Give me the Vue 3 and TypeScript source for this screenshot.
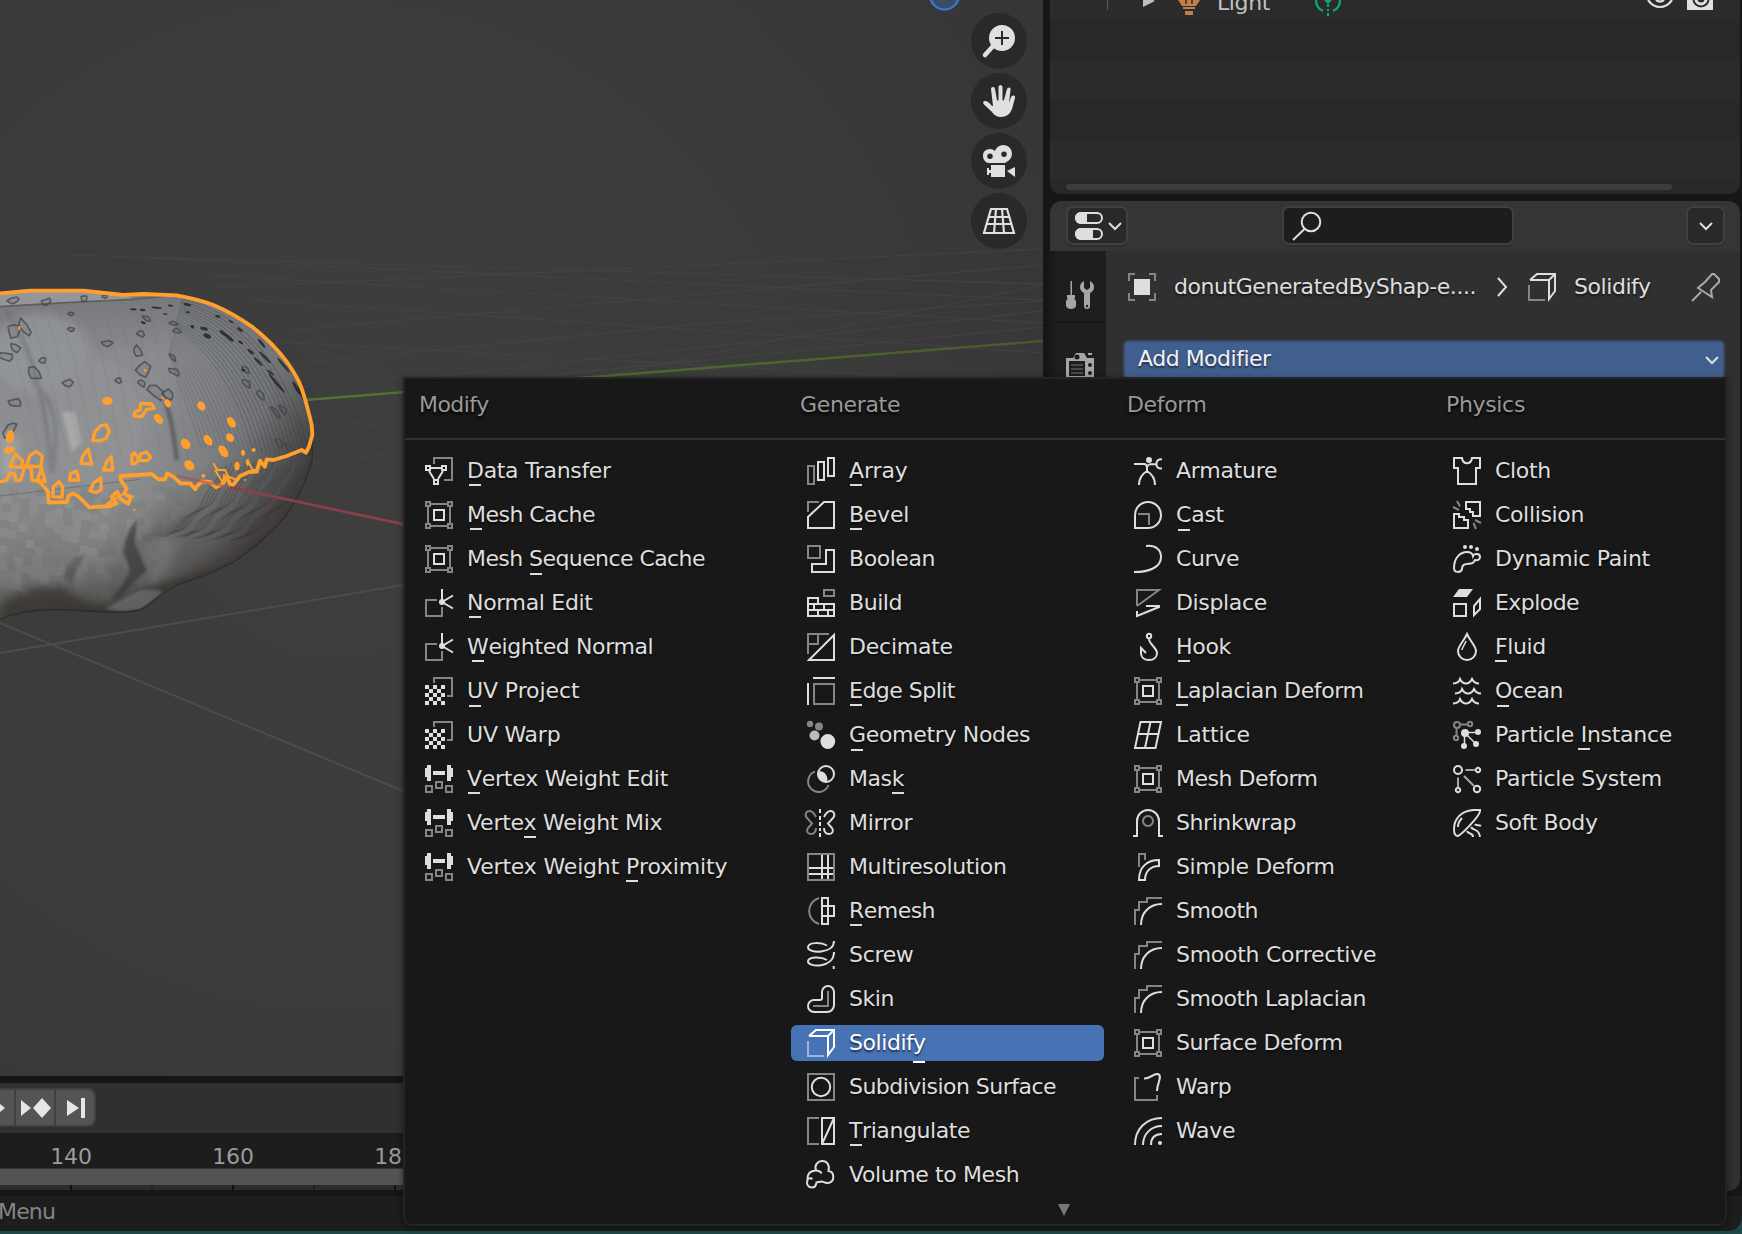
<script setup lang="ts">
type Shape = [cls: string, d: string]
interface Item { label: string; icon: string; key?: number; active?: boolean }
interface Column { title: string; cls: string; items: Item[] }

const rect = (x: number, y: number, w: number, h: number) => `M${x} ${y}h${w}v${h}h${-w}Z`
const dot = (x: number, y: number, r: number) => `M${x - r} ${y}a${r} ${r} 0 1 0 ${2 * r} 0a${r} ${r} 0 1 0 ${-2 * r} 0Z`

/* Whole-pixel glyph advances at 22px: difference from the font's own advance, in pixels */
const snap: Record<string, number> = {
  a: -.48, b: -.97, c: -.1, d: -.97, e: -.54, f: -.74, g: -.97, h: -.95, i: -.12, k: .2, l: -.12, m: -.43, n: -.95,
  o: -.46, p: -.97, q: -.97, s: -.46, t: .38, u: -.95, B: -.1, C: -.36, E: -.9, F: .3, H: -.5, I: -.5, L: -.25, M: -.98,
  N: -.46, O: -.3, P: -.27, R: -.3, S: -.97, T: -.44, W: -.1, '-': -.9,
}
const tight = (text: string) => ({
  letterSpacing: ([...text].reduce((sum, c) => sum + (snap[c] ?? 0), 0) / text.length).toFixed(3) + 'px',
})

const checker = Array.from({ length: 25 }, (_, i) => i)
  .filter(i => i % 2 === 0)
  .map(i => rect((i % 5) * 4, 8 + Math.floor(i / 5) * 4, 4, 4))
  .join('')

const icons: Record<string, Shape[]> = {
  transfer: [['sd', 'M9 7V1H27V23H19'], ['s', rect(1, 9, 4, 4) + rect(17, 9, 4, 4) + rect(9, 23, 4, 4) + 'M6 11H16M4 14L9 22M18 14L13 22']],
  cage: [['sd', rect(1, 1, 4, 4) + rect(23, 1, 4, 4) + rect(1, 23, 4, 4) + rect(23, 23, 4, 4) + 'M6 3H22M3 6V22M25 6V22M6 25H22'], ['s', rect(9, 9, 10, 10)]],
  normal: [['sd', 'M12 11H1V27H17V18'], ['f', dot(17, 13, 3)], ['s', 'M17 0V13L28 6.5M17 13L28 19.5']],
  uv: [['sd', 'M9 6V1H27V19H22'], ['f', checker]],
  weight: [['f', rect(2, 0, 4, 16) + rect(0, 3, 3, 9) + rect(22, 0, 4, 16) + rect(25, 3, 3, 9) + rect(8, 6, 12, 4)], ['sd', rect(1, 21, 6, 6) + rect(11, 17, 6, 6) + rect(21, 21, 6, 6)]],
  array: [['sd', rect(1, 9, 6, 18)], ['s', rect(11, 5, 6, 18) + rect(21, 1, 6, 18)]],
  bevel: [['sd', 'M1 11V1H12'], ['s', 'M1 27V16L17 1H27V27Z']],
  boolean: [['sd', rect(1, 1, 12, 12)], ['s', 'M19 5H27V27H5V19H19Z']],
  build: [['sd', rect(17, 1, 10, 6)], ['s', 'M1 9H11V15H27V27H1ZM1 15H11M1 21H27M7 15V21M17 15V21M11 21V27M21 21V27']],
  decimate: [['sd', 'M1 21V1H22M11 1V11H1'], ['s', 'M2 27H27V2Z']],
  edgesplit: [['s', 'M1 6V28M6 1H28'], ['sd', rect(7, 7, 20, 20)]],
  nodes: [['fd', dot(3, 3, 3.2) + dot(12, 5.5, 4)], ['fm', dot(7.5, 14.5, 5)], ['f', dot(20.8, 20.5, 7.4)]],
  mask: [['sd', 'M8 6.6A10.5 10.5 0 1 0 21.5 20'], ['f', 'M11 7C16 4 22 11 20 17C14 18 9 13 11 7Z'], ['s', dot(19, 9, 8)]],
  mirror: [['sd', 'M9 8C7 4 5 1.5 2 2C-1.5 2.5-2 6-.5 8.5L5 14.5L1 19C-1 22 .5 25 4 25C7.5 25 9 22 9 19'], ['s', 'M13 0V4M13 7V11M13 13V17M13 19V22M13 24V28M17 8C19 4 21 1.5 24 2C27.5 2.5 28 6 26.5 8.5L21 14.5L25 19C27 22 25.5 25 22 25C18.5 25 17 22 17 19']],
  multires: [['sd', rect(1, 1, 26, 26)], ['s', 'M2 15H26M2 21H26M15 2V26M21 2V26']],
  remesh: [['sd', 'M12 1A13.5 13.5 0 0 0 12 27'], ['s', rect(15, 1, 6, 26) + 'M15 9H27V19H15']],
  screw: [['s', 'M20 4.5C14 1 1 1 1 6.5C1 12.5 27 13.5 27 0M20 19C14 15.5 1 15.5 1 20.5C1 26.5 27 27.5 27 11M26.7 25V28']],
  skin: [['s', 'M15 13V7a6 6 0 0 1 12 0V20a7 7 0 0 1-7 7H7a6 6 0 0 1 0-12H13a2 2 0 0 0 2-2Z'], ['sd', 'M6 21H21V6']],
  solidify: [['s', 'M2 7L9 1H27V18L21 26V7H2M21 7L27 1'], ['sd', 'M1 12V27H17']],
  subdiv: [['sd', rect(1, 1, 26, 26)], ['s', dot(14, 14, 9.2)]],
  triangulate: [['sd', 'M12 1H1V27H12'], ['s', rect(15, 1, 12, 26) + 'M15 27L27 1']],
  volume: [['s', 'M9 9C7 4 11 0 15 0C20 0 23 4 21.5 10C28 11 28 21 21 22C18 22.5 16.5 20.5 14.5 20.5C12.5 20.5 11 21.5 9.5 21.5C9 25 7 26.5 5 26.5C1 26.5-1 23 .5 19C0 14 2 11 6 10C10 9 14 10 14.5 12.5M0 18.5C2 17 4 17 5.5 18']],
  armature: [['f', dot(15, 3, 3)], ['s', 'M0 7H10C13 7 13 9 13 11V14C8 17 5 22 5 28M13 14C18 17 21 22 21 28M13 10C14 7 16 7 22 7M28 2.2C24 2 22.2 4 22.4 7C22.2 10 24 11.8 28 11.5']],
  cast: [['s', 'M1 27V14A13 13 0 1 1 14 27Z'], ['sd', 'M4 13H15V24']],
  curve: [['s', 'M12 1C22 0 27 5 27 12C27 22 16 27 0 27']],
  displace: [['sd', 'M3 17V1H25L3 17'], ['s', 'M12 17H25V18L3 27V22']],
  hook: [['s', dot(15, 3, 2.2) + 'M15 6C15 11 23 15 23 20C23 24 20 27 15 27C10 27 7 24 7 20V15L12 20']],
  lattice: [['s', 'M6.5 1H27L21.5 27H1ZM16.5 1L11 27M4 13H24.5']],
  shrinkwrap: [['s', 'M-1 27H3V12A11 11 0 0 1 25 12V27H29'], ['sd', dot(14, 12, 5)]],
  simple: [['sd', 'M5 14V1H11V7'], ['s', 'M5 27C5 14 13 7 25 7V13C17 13 11 18 11 27Z']],
  smooth: [['sd', 'M1 28V13H5V5H13V1H28'], ['s', 'M7 28C7 16 15 7 28 7']],
  warp: [['sd', 'M5 5H1V27H23V22'], ['s', 'M10 5.5C17 6 19 0 24 1C29 3 23 10 23 18']],
  wave: [['s', 'M1 28C1 12 12 1 28 1M9 28C9 17 17 9 28 9M17 28C17 21 21 17 28 17'], ['f', dot(26, 26, 2)]],
  cloth: [['s', 'M1 1H9C10 8 18 8 19 1H27V11H23V27H5V11H1Z']],
  collision: [['s', 'M13 1H27V15H20V11H17V8H13ZM1 13H6V16H11V19H15V27H1Z'], ['sd', 'M4 0L7 5.5M0 6L6 9M22 19L28 22M20.5 22L23 28']],
  paint: [['s', 'M1 23C1 12 8 7 14 7C18 7 19.500 8.500 20 11C21 8.500 27 8 27 12C27 14.500 25 15.500 22 15C20 19 18 18.500 14 19C10 19 9 21 9 24C8 28 1 28 1 23Z'], ['f', dot(12, 2, 2) + dot(18, 2, 2) + dot(24, 4, 2)]],
  explode: [['f', 'M0 8L6 0H20L14 8Z'], ['s', rect(1, 15, 12, 12) + 'M21 17L27 10V20L21 26Z']],
  fluid: [['s', 'M14 1C11 8 5 13 5 18A9 9 0 0 0 23 18C23 13 17 8 14 1Z'], ['st', 'M9 17C9 14 12 12 13 8']],
  ocean: [['s', 'M0 6.5C4 6.5 6 5 7 2C8.5 5 10 6.5 13 6.5C16 6.5 17.5 5 19 2C20.5 5 23 6.5 26 6.5M2 16.5C6 16.5 8 15 9 12C10.5 15 12 16.5 15 16.5C18 16.5 19.5 15 21 12C22.5 15 25 16.5 28 16.5M0 26.5C4 26.5 6 25 7 22C8.5 25 10 26.5 13 26.5C16 26.5 17.5 25 19 22C20.5 25 23 26.5 26 26.5']],
  pinstance: [['sd', dot(4, 4, 3) + dot(17, 3, 2.2) + dot(3, 17, 2.2) + 'M7 3.5H14M3.5 7V14'], ['f', dot(12, 12, 4) + dot(25, 11, 3) + dot(23, 23, 3) + dot(11, 25, 3)], ['st', 'M12 11.5H25M12 12L23 23M11.5 12V25']],
  psystem: [['s', dot(5, 5, 4) + dot(25, 5, 2.2) + dot(5, 25, 2.2) + dot(24, 24, 3.2)], ['sm', 'M12.5 5H22.5M5 12.5V22.5M11 11L21 21']],
  soft: [['s', 'M27 1H20C8 2 1 10 1 20C1 24 2 27 5 27C9 25 27 7 27 2ZM5 18C5 14 7 11 9 9M22 15C23 17 26 15.5 28 17M18 18C20 22 26 19 27 28M14 22C15 26 20 23 20 28']],
  object: [['sd', 'M1 8V1H7M21 1H27V8M27 20V27H21M7 27H1V20'], ['f', rect(6, 6, 16, 16)]],
  pin: [['sm', 'M0 28L9 19M6 15L20 24L19 17L27 9V6L22 1H20L13 9Z']],
}

const columns: Column[] = [
  { title: 'Modify', cls: 'c1', items: [
    { label: 'Data Transfer', icon: 'transfer', key: 0 },
    { label: 'Mesh Cache', icon: 'cage', key: 0 },
    { label: 'Mesh Sequence Cache', icon: 'cage', key: 5 },
    { label: 'Normal Edit', icon: 'normal', key: 0 },
    { label: 'Weighted Normal', icon: 'normal', key: 0 },
    { label: 'UV Project', icon: 'uv', key: 0 },
    { label: 'UV Warp', icon: 'uv' },
    { label: 'Vertex Weight Edit', icon: 'weight', key: 0 },
    { label: 'Vertex Weight Mix', icon: 'weight', key: 5 },
    { label: 'Vertex Weight Proximity', icon: 'weight', key: 14 },
  ] },
  { title: 'Generate', cls: 'c2', items: [
    { label: 'Array', icon: 'array', key: 0 },
    { label: 'Bevel', icon: 'bevel', key: 0 },
    { label: 'Boolean', icon: 'boolean' },
    { label: 'Build', icon: 'build' },
    { label: 'Decimate', icon: 'decimate' },
    { label: 'Edge Split', icon: 'edgesplit', key: 0 },
    { label: 'Geometry Nodes', icon: 'nodes', key: 0 },
    { label: 'Mask', icon: 'mask', key: 3 },
    { label: 'Mirror', icon: 'mirror' },
    { label: 'Multiresolution', icon: 'multires' },
    { label: 'Remesh', icon: 'remesh', key: 0 },
    { label: 'Screw', icon: 'screw' },
    { label: 'Skin', icon: 'skin' },
    { label: 'Solidify', icon: 'solidify', key: 7, active: true },
    { label: 'Subdivision Surface', icon: 'subdiv' },
    { label: 'Triangulate', icon: 'triangulate', key: 0 },
    { label: 'Volume to Mesh', icon: 'volume' },
  ] },
  { title: 'Deform', cls: 'c3', items: [
    { label: 'Armature', icon: 'armature' },
    { label: 'Cast', icon: 'cast', key: 0 },
    { label: 'Curve', icon: 'curve' },
    { label: 'Displace', icon: 'displace' },
    { label: 'Hook', icon: 'hook', key: 0 },
    { label: 'Laplacian Deform', icon: 'cage', key: 0 },
    { label: 'Lattice', icon: 'lattice' },
    { label: 'Mesh Deform', icon: 'cage' },
    { label: 'Shrinkwrap', icon: 'shrinkwrap' },
    { label: 'Simple Deform', icon: 'simple' },
    { label: 'Smooth', icon: 'smooth' },
    { label: 'Smooth Corrective', icon: 'smooth' },
    { label: 'Smooth Laplacian', icon: 'smooth' },
    { label: 'Surface Deform', icon: 'cage' },
    { label: 'Warp', icon: 'warp' },
    { label: 'Wave', icon: 'wave' },
  ] },
  { title: 'Physics', cls: 'c4', items: [
    { label: 'Cloth', icon: 'cloth' },
    { label: 'Collision', icon: 'collision' },
    { label: 'Dynamic Paint', icon: 'paint' },
    { label: 'Explode', icon: 'explode' },
    { label: 'Fluid', icon: 'fluid', key: 0 },
    { label: 'Ocean', icon: 'ocean', key: 0 },
    { label: 'Particle Instance', icon: 'pinstance', key: 9 },
    { label: 'Particle System', icon: 'psystem' },
    { label: 'Soft Body', icon: 'soft' },
  ] },
]

const keyClass = (c: string) => (/[CSGUO]/.test(c) ? 'key round' : c === 'y' ? 'key low' : 'key')

/* Surface pits: x, y, half width, half height, rotation */
const pits: number[][] = [
  [40, 92, 18, 9, -15], [140, 95, 16, 10, -15], [252, 85, 11, 9, 0], [313, 80, 9, 5, 0], [213, 132, 9, 5, 0], [214, 178, 10, 7, 0],
  [322, 220, 17, 9, 5], [42, 182, 22, 22, 20], [72, 172, 12, 30, -35], [46, 235, 18, 11, 30], [20, 260, 22, 14, 10], [128, 270, 11, 9, 0],
  [102, 311, 16, 24, -45], [204, 340, 18, 11, 5], [356, 332, 10, 8, 0], [46, 398, 20, 14, 5], [30, 480, 14, 30, 35], [412, 245, 12, 20, -30],
  [430, 300, 24, 22, 20], [424, 192, 13, 9, 15], [440, 145, 14, 6, 30], [518, 262, 14, 6, 45], [522, 305, 18, 9, 30], [425, 340, 15, 8, 40],
  [470, 368, 32, 16, 40], [505, 372, 20, 14, 30], [520, 160, 13, 6, 10], [530, 183, 13, 7, 15], [738, 300, 14, 7, 45], [740, 340, 17, 9, 50],
  [782, 374, 18, 8, 50], [838, 520, 9, 18, -30], [870, 540, 8, 24, -30], [850, 420, 7, 20, -35], [825, 425, 6, 22, -40],
]
const jag = [1, .75, 1.1, .8, 1.15, .7, 1, .95]
const pitPaths = pits.map(([x, y, rx, ry, deg], n) => {
  const t = (deg * Math.PI) / 180
  const pts = Array.from({ length: 7 }, (_, i) => {
    const a = (i / 7) * Math.PI * 2 + n
    const k = jag[(i * 3 + n) % 8]
    const u = Math.cos(a) * rx * k
    const v = Math.sin(a) * ry * k
    return `${(x + u * Math.cos(t) - v * Math.sin(t)).toFixed(1)} ${(y + u * Math.sin(t) + v * Math.cos(t)).toFixed(1)}`
  })
  return `M${pts.join('L')}Z`
})
const specks: number[][] = [
  [400, 118, 10, 3, 0], [428, 120, 9, 4, 5], [470, 113, 16, 3, 5], [512, 107, 9, 3, 5], [562, 104, 12, 4, 10], [563, 127, 7, 3, 10], [430, 158, 8, 4, 20],
  [495, 132, 8, 2, 10], [577, 170, 6, 5, 30], [612, 176, 12, 5, 15], [622, 198, 12, 7, 25], [653, 139, 8, 4, 20], [693, 155, 8, 3, 30], [720, 179, 10, 4, 35],
  [670, 190, 14, 5, 40], [688, 204, 16, 5, 40], [722, 217, 8, 4, 30], [752, 245, 12, 4, 40], [785, 220, 17, 4, 50], [775, 275, 18, 4, 45],
  [795, 262, 25, 4, 45], [812, 308, 13, 3, 40], [830, 340, 38, 4, 50], [850, 285, 28, 4, 50], [872, 300, 22, 3, 55], [890, 355, 24, 5, 60],
  [905, 375, 24, 4, 65], [730, 300, 7, 4, 20],
]
const blobs: number[][] = [
  [322, 393, 16, 12, 0], [604, 408, 11, 15, -30], [694, 457, 11, 18, -35], [690, 503, 11, 14, -35], [624, 511, 11, 18, -35], [670, 544, 12, 20, -35],
  [557, 522, 13, 17, -40], [568, 586, 13, 17, -45], [711, 588, 8, 13, 0], [475, 447, 11, 17, -40], [503, 400, 9, 13, -30], [729, 548, 6, 9, 0],
  [743, 577, 5, 10, 0], [28, 540, 17, 10, -15], [30, 500, 12, 20, 10],
]
const rings = [
  'M278 512L285 485L303 467L320 465L328 485L318 505L302 512Z', 'M243 580L248 558L265 538L275 582Z', 'M310 600L322 572L334 560L338 600Z',
  'M208 630L212 610L230 604L237 630Z', 'M270 662L280 640L302 624L304 658L288 668Z', 'M158 680L160 650L177 635L188 650L186 682Z',
  'M402 438L405 425L420 420L422 400L455 402L462 415L440 418L425 440Z', 'M396 582V555L403 548L416 565L408 580Z',
  'M416 572L422 552L440 546L452 562L440 572Z', 'M30 590L46 552L68 572L64 592Z', 'M80 588L90 555L110 545L127 558L122 590Z',
  'M112 630L124 594L136 635Z', 'M0 635L18 632L30 610L44 612L48 632L62 630L75 588L94 596L96 630L116 634L132 650',
]
const ripples = Array.from({ length: 26 }, (_, i) => {
  const o = i * 13 + 8
  return { d: `M${(545 - o * .12).toFixed(0)} ${(82 + o * .5).toFixed(0)}Q${(840 - o * .85).toFixed(0)} ${(150 + o * .75).toFixed(0)} ${(938 - o).toFixed(0)} ${560 - i}`, far: i > 13 }
})
const folds = Array.from({ length: 20 }, (_, i) => {
  const o = i * 14
  return `M${932 - o} ${572 + (i % 4) * 6}q-8 34-26 ${52}t-30 48t-38 42t-44 ${44}t-60 ${38 - i}`
})
const strands = Array.from({ length: 12 }, (_, i) =>
  `M${-10 + i * 46} 120C${55 + i * 42} 235 ${80 + i * 42} 390 ${125 + i * 40} 570`)

/* Low-poly shading of the lower half */
const noise = (n: number) => {
  const v = Math.sin(n * 127.1) * 43758.5453
  return v - Math.floor(v)
}
const facets = Array.from({ length: 260 }, (_, i) => {
  const c = i % 20
  const r = Math.floor(i / 20)
  const x = c * 27 - r * 2 + noise(r + 40) * 12
  const y = 650 + r * 25 + Math.sin(c * .7) * 10
  return { d: `M${x.toFixed(0)} ${y.toFixed(0)}l27 2l2 24l-28 -1Z`, tone: Math.floor(noise(i + 3) * 4) }
})

const gridLines = [
  'M0 653L403 585', 'M0 623L403 791', 'M310 417L403 429', 'M300 464L403 452', 'M290 340L403 380', 'M280 342L1043 384',
  'M280 365L700 324L1043 301', 'M290 330L1043 265', 'M250 300L1043 353', 'M210 275L1043 323', 'M210 288L1043 249', 'M150 258L1043 300',
  'M420 378L1043 311', 'M70 255L1043 284', 'M600 377L1043 285', 'M520 378L1043 327',
]
const frames = [140, 160, 180]
</script>

<template>
  <div class="window">
    <main class="view">
      <svg class="scene" width="1043" height="1076" viewBox="0 0 1043 1076">
        <defs>
          <radialGradient id="world" cx=".32" cy=".47" r=".85"><stop offset="0" stop-color="#3e3e3e" /><stop offset=".55" stop-color="#3b3b3b" /><stop offset="1" stop-color="#353535" /></radialGradient>
          <linearGradient id="body" x1="0" y1="60" x2="0" y2="1040" gradientUnits="userSpaceOnUse"><stop offset="0" stop-color="#747679" /><stop offset=".2" stop-color="#898b8e" /><stop offset=".55" stop-color="#8d8f91" /><stop offset=".75" stop-color="#858787" /><stop offset=".88" stop-color="#747574" /><stop offset="1" stop-color="#52514f" /></linearGradient>
          <linearGradient id="side" x1="450" y1="400" x2="950" y2="570" gradientUnits="userSpaceOnUse"><stop offset="0" stop-color="#4d4f52" stop-opacity="0" /><stop offset=".6" stop-color="#4a4c4f" stop-opacity=".35" /><stop offset=".9" stop-color="#3c3c3d" stop-opacity=".75" /><stop offset="1" stop-color="#343230" stop-opacity=".95" /></linearGradient>
          <linearGradient id="under" x1="480" y1="680" x2="680" y2="930" gradientUnits="userSpaceOnUse"><stop offset="0" stop-color="#3d3a38" stop-opacity="0" /><stop offset=".65" stop-color="#3f3b39" stop-opacity=".45" /><stop offset="1" stop-color="#35312f" /></linearGradient>
          <linearGradient id="green" x1="307" x2="1043" gradientUnits="userSpaceOnUse"><stop offset="0" stop-color="#557232" /><stop offset="1" stop-color="#465b2b" /></linearGradient>
          <filter id="soft" x="-30%" y="-30%" width="160%" height="160%"><feGaussianBlur stdDeviation="13" /></filter>
          <filter id="soft2" x="-30%" y="-30%" width="160%" height="160%"><feGaussianBlur stdDeviation="5" /></filter>
          <clipPath id="donut"><path d="M0 66L250 62L370 74L530 75Q650 100 760 170Q870 270 905 350Q935 430 938 490L940 570Q920 650 860 740Q790 820 700 880Q620 920 540 945C480 970 450 1012 420 1022C370 1036 290 1026 200 1022Q80 1017 0 1050Z" /></clipPath>
        </defs>
        <rect width="1043" height="1076" fill="url(#world)" />
        <g class="grid"><path v-for="(d, i) in gridLines" :key="i" :d="d" :class="{ near: i < 2 }" /></g>
        <path d="M305 400L1043 341" stroke="url(#green)" stroke-width="2.4" />
        <g transform="translate(0 270) scale(.33333)">
          <g clip-path="url(#donut)">
            <rect y="40" width="960" height="1030" fill="url(#body)" />
            <ellipse cx="120" cy="250" rx="150" ry="120" fill="#959799" opacity=".75" filter="url(#soft)" />
            <ellipse cx="290" cy="460" rx="150" ry="190" fill="#919395" opacity=".7" filter="url(#soft)" />
            <path d="M0 60H280L390 82L400 90L0 110Z" fill="#949698" />
            <path d="M0 110L200 98L400 88L520 76" fill="none" stroke="#5c5e60" stroke-width="5" />
            <path d="M20 122C100 250 130 360 155 600M95 330C170 400 180 470 155 610" class="crease" />
            <path d="M185 425L225 425L245 520L215 545Z" fill="#b3b5b7" opacity=".65" filter="url(#soft2)" />
            <path d="M0 480L60 510L50 630H0Z" fill="#b0b2b4" opacity=".5" filter="url(#soft)" />
            <path v-for="(f, i) in facets" :key="'q' + i" :d="f.d" :class="'facet t' + f.tone" />
            <rect width="960" height="1070" fill="url(#side)" />
            <rect width="960" height="1070" fill="url(#under)" />
            <path v-for="(d, i) in strands" :key="'s' + i" :d="d" class="strand" />
            <path d="M495 390Q520 460 530 570" class="crease deep" />
            <path v-for="(r, i) in ripples" :key="'r' + i" :d="r.d" :class="['ripple', { far: r.far }]" />
            <path v-for="(d, i) in folds" :key="'f' + i" :d="d" class="fold" />
            <path d="M0 1000Q90 940 190 950Q240 1000 330 1005L450 950L700 880L420 1060H0Z" fill="#302f2c" opacity=".7" filter="url(#soft)" />
            <path d="M190 920Q205 860 255 855L230 900L215 950Z" fill="#3a3b3a" opacity=".4" filter="url(#soft2)" />
            <path d="M370 845Q380 780 410 750L405 825L440 900Q390 950 360 980L335 990Q380 930 390 900Z" fill="#2f302f" opacity=".6" filter="url(#soft2)" />
            <path d="M365 850Q460 770 590 730Q550 800 440 810L400 860Z" fill="#454746" opacity=".4" filter="url(#soft)" />
            <path d="M315 1018L390 975Q430 950 490 965L425 1018L370 1024Z" fill="#77797a" opacity=".65" filter="url(#soft2)" />
            <path d="M450 830Q490 780 540 820L510 900L450 950Z" fill="#7d807f" opacity=".5" filter="url(#soft)" />
            <path d="M938 490L940 570Q920 650 860 740Q790 820 700 880Q620 920 540 945C480 970 450 1012 420 1022C370 1036 290 1026 200 1022Q80 1017 0 1050" class="rim" />
            <path v-for="(d, i) in pitPaths" :key="'p' + i" :d="d" class="pit" />
            <ellipse v-for="(p, i) in specks" :key="'k' + i" :rx="p[2]" :ry="p[3]" :transform="`translate(${p[0]} ${p[1]}) rotate(${p[4]})`" class="speck" />
            <path d="M0 678L420 628" stroke="#5d5e5f" stroke-width="3" opacity=".6" />
          </g>
          <g class="select">
            <path d="M0 70L90 62H250L370 75L430 72L530 76Q600 89 640 105Q700 130 760 173Q820 220 860 275Q895 325 905 355Q920 400 935 465L937 495L927 530L918 548L905 540L860 558L820 570L800 568L795 590L780 572L770 605L748 606L720 618L703 640L694 650L680 620L668 642L648 652L630 636L605 634L590 650L586 658L570 640H542L520 620L502 610L495 628H475L455 612L362 618V630L380 655L372 672L392 680L385 702L360 685L352 665L335 680L350 700L330 708L268 712L234 678L218 670L205 678L200 696L146 698L144 665L132 650" class="outline" />
            <path v-for="(d, i) in rings" :key="'o' + i" :d="d" />
            <path d="M640 580L652 600L675 600L685 620L710 630M645 600L670 640L672 612M742 570L758 600L775 600M370 672L350 682L322 700L345 702M485 380L492 388M58 168V180M436 297V305M400 720H406M735 632V628M610 612V624M604 617H616M761 534V546M755 540H767M390 680H402" class="thin" />
          </g>
          <ellipse v-for="(p, i) in blobs" :key="'b' + i" :rx="p[2]" :ry="p[3]" :transform="`translate(${p[0]} ${p[1]}) rotate(${p[4]})`" fill="#ff9f2d" />
          <path d="M530 618L700 654" stroke="#a2525a" stroke-width="7" opacity=".6" /><path d="M690 652L1212 763" stroke="#89404b" stroke-width="8" />
        </g>
        <circle cx="944.5" cy="-5" r="14.5" fill="#3a4d66" stroke="#3777d0" stroke-width="2.4" />
      </svg>
      <nav class="gizmos">
        <button class="gizmo"><svg viewBox="0 0 32 32"><circle cx="19" cy="13" r="13" fill="#e0e0e0" /><path d="M11 20L2 30" stroke="#e0e0e0" stroke-width="4.5" stroke-linecap="round" /><path d="M19 6V20M12 13H26" stroke="#2a2a2a" stroke-width="2" /></svg></button>
        <button class="gizmo"><svg viewBox="0 0 32 32"><path d="M8 4Q8 2 10 2Q12 2 12 4L14 15Q15 16 15.5 15V2Q16 0 17.5 0Q19 0 19.5 2V15Q20 16 21 15L24 4Q25 2 26.5 2.5Q28 3 27.5 5L26 18L28 12Q29 10 31 10.5Q32.500 11 32 13L29 24Q26 32 18 32Q12 32 9 27L.5 19Q-.5 16 2 16Q5 16 9 21H10Z" fill="#e0e0e0" /></svg></button>
        <button class="gizmo"><svg viewBox="0 0 32 32"><path fill-rule="evenodd" d="M6 18A6 7 0 0 1 0 11A7 6.500 0 0 1 12 6A8.700 8.700 0 1 1 25 16L22 18ZM7 8.500A2.700 2.700 0 1 0 7 14A2.700 2.700 0 1 0 7 8.500ZM21 6.500A2.700 2.700 0 1 0 21 12A2.700 2.700 0 1 0 21 6.500ZM8 20H22V32H8V28H6V30H4V23H6V25H8ZM24 26L32 22V32Z" fill="#e0e0e0" /></svg></button>
        <button class="gizmo"><svg viewBox="0 0 32 32"><path d="M8 4H24L31 28H1ZM5 12H27M3 19H29M13 4L11 28M19 4L21 28" fill="none" stroke="#e0e0e0" stroke-width="2.200" /></svg></button>
      </nav>
    </main>

    <aside class="right">
      <section class="outliner">
        <div class="orow first">
          <span class="guide"></span><span class="tri"></span>
          <svg class="bulb" viewBox="0 0 24 16"><path d="M1 0H23L19 6H5ZM6 7H18V9H6ZM8 11H16V15H8Z" fill="#c07f4c" /><path d="M9 0V4M15 0V4" stroke="#2b2b2b" stroke-width="1.500" /></svg>
          <span class="olabel" :style="tight('Light')">Light</span>
          <svg class="data" viewBox="0 0 26 16"><path d="M1 0Q1 8 8 11M25 0Q25 8 18 11M13 4V7M13 9V11M13 13V16" fill="none" stroke="#0aa87d" stroke-width="2.200" /><path d="M9 0H17L13 4Z" fill="#0aa87d" /></svg>
          <svg class="eye" viewBox="0 0 26 10"><path d="M1 0Q6 7 13 7Q20 7 25 0M9 0Q13 3 17 0" fill="none" stroke="#e0e0e0" stroke-width="2.200" /></svg>
          <svg class="cam" viewBox="0 0 26 10"><path d="M0 0H26V10H0Z" fill="#e0e0e0" /><circle cx="14" cy="-1" r="7.500" fill="#e0e0e0" stroke="#2b2b2b" stroke-width="2" /><circle cx="14" cy="-1" r="3.500" fill="#2b2b2b" /></svg>
        </div>
        <div class="orow"></div><div class="orow alt"></div><div class="orow"></div><div class="orow alt"></div>
        <div class="scroll"></div>
      </section>

      <section class="props">
        <header class="phead">
          <button class="btn editor">
            <svg width="28" height="28" viewBox="0 0 28 28"><rect x="1" y="1" width="26" height="10" rx="5" class="s" /><path d="M6 0H12V12H6A6 6 0 0 1 6 0Z" class="f" /><rect x="1" y="17" width="26" height="10" rx="5" class="s" /><path d="M6 16H18V28H6A6 6 0 0 1 6 16Z" class="f" /></svg>
            <svg class="down" width="14" height="9" viewBox="0 0 14 9"><path d="M1 1L7 7L13 1" class="s" /></svg>
          </button>
          <div class="search"><svg width="30" height="30" viewBox="0 0 30 30"><circle cx="19" cy="11" r="9.300" class="s" /><path d="M12.500 18L1 29" class="s" /></svg></div>
          <button class="btn opts"><svg class="down" width="14" height="9" viewBox="0 0 14 9"><path d="M1 1L7 7L13 1" class="s" /></svg></button>
        </header>
        <div class="pbody">
          <div class="tabs">
            <div class="tab"><svg width="28" height="28" viewBox="0 0 28 28"><path d="M4.500 0H6V14H9V17H8L10 20V25Q9 28 5 28Q1 28 0 25V20L2 17H1V14H4.500ZM18 0V7L21 9L24 7V0Q28 2 28 6Q28 10 24 12V25Q24 28 21 28Q18 28 18 25V12Q14 10 14 6Q14 2 18 0Z" fill="#a6a6a6" /><circle cx="21" cy="25" r="1.200" fill="#1d1d1d" /></svg></div>
            <div class="tab"><svg width="28" height="28" viewBox="0 0 28 28"><path d="M7 5L10 0H18L21 5H28V28H0V5Z" fill="#a6a6a6" /><circle cx="11" cy="4" r="2.500" fill="#1d1d1d" /><path d="M22 0H26V2H22Z" fill="#a6a6a6" /><path d="M3 8H19V23H3Z" fill="#1d1d1d" /><path d="M5 12H17M5 16H17M5 20H17" stroke="#777" /><circle cx="24" cy="12" r="2" fill="#1d1d1d" /><circle cx="24" cy="20" r="2" fill="#1d1d1d" /></svg></div>
          </div>
          <div class="pmain">
            <div class="crumbs">
              <svg class="icon" viewBox="0 0 28 28"><path v-for="(s, i) in icons.object" :key="i" :class="s[0]" :d="s[1]" /></svg>
              <span class="cname" :style="tight('donutGeneratedByShap-e....')">donutGeneratedByShap-e....</span>
              <svg class="chev" width="12" height="20" viewBox="0 0 12 20"><path d="M2 1L10 10L2 19" class="s" /></svg>
              <svg class="icon" viewBox="0 0 28 28"><path v-for="(s, i) in icons.solidify" :key="i" :class="s[0]" :d="s[1]" /></svg>
              <span class="cmod" :style="tight('Solidify')">Solidify</span>
              <svg class="icon pin" viewBox="0 0 28 28"><path v-for="(s, i) in icons.pin" :key="i" :class="s[0]" :d="s[1]" /></svg>
            </div>
            <button class="add"><span :style="tight('Add Modifier')">Add Modifier</span><svg width="14" height="9" viewBox="0 0 14 9"><path d="M1 1L7 7L13 1" class="s" /></svg></button>
          </div>
        </div>
      </section>
    </aside>

    <section class="timeline">
      <div class="controls">
        <button class="play p1"><svg width="14" height="20" viewBox="0 0 14 20"><path d="M-6 1L5 10L-6 19Z" fill="#e6e6e6" /></svg></button>
        <button class="play p2"><svg width="30" height="20" viewBox="0 0 30 20"><path d="M0 2L10 10L0 18ZM12 10L21 0L30 10L21 20Z" fill="#e6e6e6" /></svg></button>
        <button class="play p3"><svg width="18" height="20" viewBox="0 0 18 20"><path d="M0 2L12 10L0 18ZM14 0H18V20H14Z" fill="#e6e6e6" /></svg></button>
      </div>
      <div class="ruler"><span v-for="f in frames" :key="f">{{ f }}</span></div>
      <div class="range"></div>
      <div class="ticks"><i></i><i class="half"></i><i></i><i class="half"></i><i></i></div>
    </section>
    <footer class="status"><span :style="tight('Menu')">Menu</span></footer>

    <div class="menu">
      <div v-for="col in columns" :key="col.title" :class="['col', col.cls]">
        <h3 :style="tight(col.title)">{{ col.title }}</h3>
        <ul>
          <li v-for="it in col.items" :key="it.label" :class="{ active: it.active }">
            <svg class="icon" viewBox="0 0 28 28"><path v-for="(s, i) in icons[it.icon]" :key="i" :class="s[0]" :d="s[1]" /></svg>
            <span v-if="it.key === undefined" class="label" :style="tight(it.label)">{{ it.label }}</span>
            <span v-else class="label" :style="tight(it.label)">{{ it.label.slice(0, it.key) }}<span :class="keyClass(it.label[it.key])">{{ it.label[it.key] }}</span>{{ it.label.slice(it.key + 1) }}</span>
          </li>
        </ul>
      </div>
      <span class="more"></span>
    </div>
  </div>
</template>

<style>
body { margin: 0; overflow: hidden; background: #2a5d5d; }
</style>

<style scoped>
.window { position: relative; box-sizing: border-box; width: 1742px; height: 1234px; display: grid; grid-template-columns: 1043px 1fr; grid-template-rows: 1076px 120px 35px; background: linear-gradient(#161616, #161616) top / 100% 1200px no-repeat, #1f4848; font: 22px/36px "DejaVu Sans", sans-serif; color: #dedede; overflow: hidden; }
button { padding: 0; border: 0; font: inherit; color: inherit; }
svg { display: block; }
.s, .sd, .sm, .st { fill: none; stroke: #dedede; stroke-width: 2; }
.sd { stroke: #858585; }
.sm { stroke: #a8a8a8; }
.st { stroke-width: 1.5; }
.f { fill: #dedede; }
.fd { fill: #858585; }
.fm { fill: #bbb; }
.icon { width: 28px; height: 28px; flex: none; overflow: visible; }

.view { position: relative; grid-column: 1; grid-row: 1; overflow: hidden; }
.grid path { fill: none; stroke: #464646; stroke-width: 1.3; opacity: .6; }
.grid path.near { stroke: #4c4c4c; stroke-width: 2; opacity: 1; }
.crease { fill: none; stroke: #606264; stroke-width: 15; opacity: .3; filter: url(#soft2); }
.crease.deep { stroke: #47494b; opacity: .65; stroke-width: 12; }
.strand { fill: none; stroke: #5f6265; stroke-width: 6; opacity: .07; }
.facet { opacity: .045; }
.t0 { fill: #fff; } .t1 { fill: #222; } .t2 { fill: #bbb; } .t3 { fill: #444; }
.ripple { fill: none; stroke: #303235; stroke-width: 4; opacity: .24; }
.ripple.far { opacity: .12; }
.fold { fill: none; stroke: #2c2d2e; stroke-width: 5; opacity: .24; }
.rim { fill: none; stroke: #2c2a29; stroke-width: 10; opacity: .75; }
.pit { fill: #55575a; fill-opacity: .16; stroke: #434548; stroke-width: 5; opacity: .75; stroke-linejoin: round; }
.speck { fill: #242628; opacity: .85; }
.select path { fill: none; stroke: #ff9f2d; stroke-width: 10; stroke-linejoin: round; }
.select .outline { stroke-width: 11.5; }
.select .thin { stroke-width: 6; }
.gizmos { position: absolute; right: 16px; top: 13px; display: flex; flex-direction: column; gap: 4px; }
.gizmo { width: 56px; height: 56px; border-radius: 50%; background: #292929; display: grid; place-items: center; }
.gizmo svg { width: 32px; height: 32px; overflow: visible; }

.right { grid-column: 2; grid-row: 1 / 3; padding-left: 7px; padding-right: 2px; display: flex; flex-direction: column; gap: 7px; min-height: 0; }
.outliner { height: 194px; box-sizing: border-box; background: #282828; border-radius: 0 0 10px 10px; overflow: hidden; }
.orow { height: 40px; background: #282828; }
.orow.alt, .orow.first { background: #2b2b2b; }
.orow.first { height: 20px; display: flex; align-items: flex-start; }
.guide { width: 1px; height: 10px; background: #5a5a5a; margin-left: 57px; }
.tri { width: 0; height: 0; border-left: 12px solid #bdbdbd; border-top: 6px solid transparent; border-bottom: 6px solid transparent; margin: -5px 0 0 35px; }
.bulb { width: 24px; height: 16px; margin-left: 22px; }
.olabel { line-height: 36px; margin: -15px 0 0 16px; width: 53px; color: #c2c2c2; }
.data { width: 26px; height: 16px; margin-left: 45px; }
.eye { width: 26px; height: 10px; margin-left: 306px; }
.cam { width: 26px; height: 10px; margin-left: 14px; }
.scroll { height: 6px; width: 606px; margin: 4px 0 0 16px; border-radius: 3px; background: #3c3c3c; }
.props { height: 990px; border-radius: 12px; overflow: hidden; background: #303030; display: flex; flex-direction: column; }
.phead { height: 50px; box-sizing: border-box; padding: 5px 15px 0 16px; background: #353535; display: flex; }
.btn, .search { box-sizing: border-box; height: 39px; background: #292929; border: 2px solid #404040; border-radius: 7px; display: flex; align-items: center; box-shadow: 0 2px #2e2e2e; }
.editor { width: 62px; gap: 5px; padding-left: 7px; }
.down { margin-top: 2px; }
.search { width: 232px; background: #1d1d1d; padding-left: 8px; margin: 0 auto 0 154px; }
.search svg { overflow: visible; }
.opts { width: 39px; justify-content: center; }
.pbody { flex: 1; display: flex; }
.tabs { width: 56px; background: #1a1a1a; }
.tab { height: 72px; margin-left: 5px; box-sizing: border-box; background: #1e1e1e; border-bottom: 2px solid #181818; padding: 30px 0 0 11px; }
.pmain { flex: 1; padding: 18px 14px 0 17px; }
.crumbs { height: 36px; display: flex; align-items: center; padding-left: 5px; }
.cname { width: 306px; margin-left: 18px; white-space: nowrap; text-shadow: 0 2px 2px #0008; }
.chev { margin: 0 20px 0 16px; }
.crumbs .icon + .cmod { margin-left: 18px; width: 99px; text-shadow: 0 2px 2px #0008; }
.pin { margin-left: 19px; }
.add { width: 602px; height: 40px; box-sizing: border-box; margin-top: 35px; padding: 0 4px 2px 13px; border: 2px solid #3a4965; border-radius: 6px; background: #405e8e; color: #f2f2f2; display: flex; align-items: center; justify-content: space-between; text-shadow: 0 2px 2px #0008; }
.add svg { margin-top: 3px; }

.timeline { grid-column: 1; grid-row: 2; padding-top: 7px; display: flex; flex-direction: column; }
.controls { height: 50px; box-sizing: border-box; background: #303030; padding-top: 5px; display: flex; }
.play { box-sizing: border-box; height: 39px; background: #545454; border: 2px solid #404040; border-left: 0; display: grid; place-items: center; }
.p1 { width: 16px; place-items: center start; } .p2 { width: 40px; padding-left: 1px; } .p3 { width: 40px; border-radius: 0 8px 8px 0; padding-left: 1px; }
.ruler { height: 35px; background: #1d1d1d; color: #9b9b9b; display: flex; gap: 62px; padding-left: 21px; line-height: 48px; }
.ruler span { width: 100px; text-align: center; letter-spacing: -.1px; }
.range { height: 17px; border-top: 1px solid #353535; background: #545454; box-sizing: border-box; }
.ticks { height: 5px; background: #2c2c2c; display: flex; gap: 79px; padding-left: 70px; }
.ticks i { width: 2px; background: #111; }
.ticks .half { background: #212121; }
.status { grid-column: 1 / 3; grid-row: 3; background: #1d1d1d; color: #858585; line-height: 31px; border-radius: 0 0 14px 0; text-indent: -2px; }

.menu { position: absolute; left: 403px; top: 377px; width: 1324px; height: 849px; box-sizing: border-box; border: 2px solid #242424; border-radius: 0 0 9px 9px; background: linear-gradient(#303030, #303030) 0 59px / 100% 2px no-repeat, #181818; box-shadow: 0 2px 7px #0007; display: flex; padding-left: 4px; }
.c1 { width: 382px; } .c2 { width: 327px; } .c3 { width: 319px; } .c4 { width: 282px; }
h3 { margin: 0; padding: 8px 0 0 9px; height: 66px; font: inherit; color: #999; text-shadow: 0 2px 3px #000; }
.c1 h3 { padding-left: 10px; }
ul { list-style: none; margin: 0; padding: 0; display: flex; flex-direction: column; gap: 8px; }
li { width: 313px; height: 36px; display: flex; align-items: center; padding-left: 16px; box-sizing: border-box; border-radius: 6px; }
li.active { background: #4772b3; color: #fff; }
li.active .s { stroke: #fff; }
li.active .sd { stroke: #9db5d9; }
.label { margin-left: 14px; white-space: nowrap; text-shadow: 0 2px 2px #0009; }
.key { position: relative; }
.key::after { content: ""; position: absolute; left: calc(50% - 6px); top: 26px; width: 12px; height: 2px; background: currentColor; }
.key.round::after { top: 27px; }
.key.low::after { top: 31px; }
.more { position: absolute; left: 653px; top: 825px; border: 6px solid transparent; border-top: 12px solid #787878; border-bottom: 0; }
</style>
